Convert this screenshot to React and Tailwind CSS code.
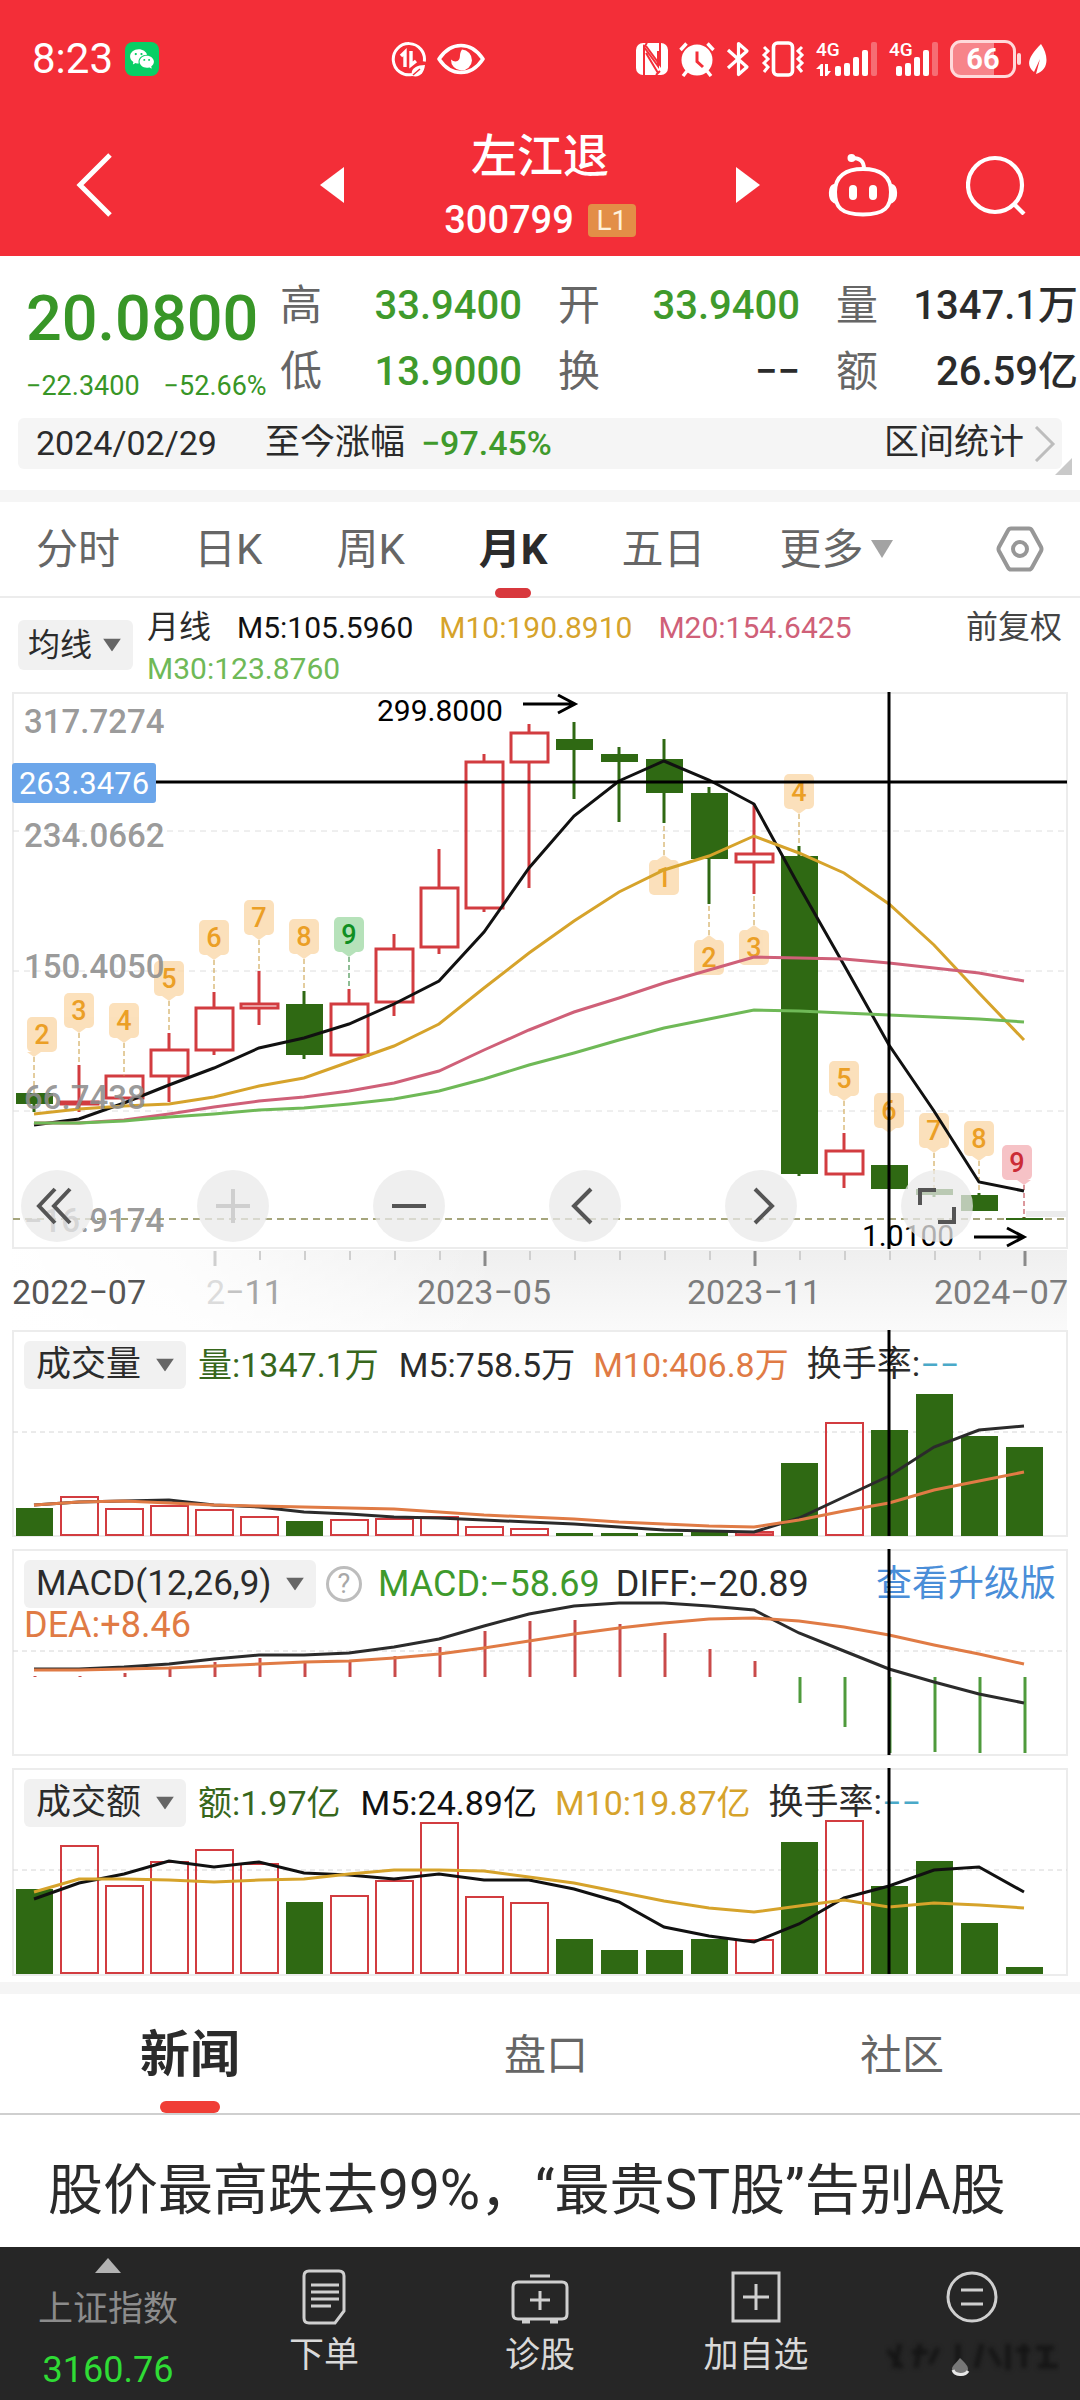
//react
import { useState } from 'react'

//icon
import { RiWechatFill } from 'react-icons/ri'

const UP = '#d23c40'
const DOWN = '#2f6913'

//x of a month on every chart, one step for each candle
const at = (i) => 34 + i * 45

const toPoints = (values) => values.map((y, i) => `${at(i)},${y}`).join(' ')

//[rising, high, body top, body bottom, low]
const candles = [
    [0, 401, 401, 412, 420],
    [1, 373, 410, 412, 420],
    [1, 384, 384, 406, 406],
    [1, 341, 358, 384, 410],
    [1, 300, 316, 358, 363],
    [1, 279, 312, 316, 333],
    [0, 299, 312, 363, 367],
    [1, 297, 312, 363, 363],
    [1, 242, 257, 310, 324],
    [1, 157, 196, 255, 262],
    [1, 62, 70, 216, 220],
    [1, 32, 41, 70, 196],
    [0, 30, 47, 58, 107],
    [0, 55, 62, 70, 130],
    [0, 47, 67, 101, 131],
    [0, 95, 101, 167, 212],
    [1, 112, 162, 170, 202],
    [0, 154, 164, 482, 484],
    [1, 441, 459, 482, 496],
    [0, 473, 473, 497, 497],
    [0, 496, 497, 503, 505],
    [0, 501, 503, 519, 519],
    [0, 525, 526, 528, 528],
]

const priceLines = [
    { color: '#111111', values: [433, 427, 411, 393, 376, 356, 346, 332, 312, 289, 240, 176, 124, 89, 69, 88, 112, 194, 273, 353, 419, 490, 499] },
    { color: '#d6a32b', values: [422, 417, 414, 412, 405, 394, 386, 370, 354, 332, 296, 261, 229, 200, 178, 164, 144, 161, 181, 212, 253, 301, 348] },
    { color: '#cf6078', values: [431, 431, 428, 422, 415, 409, 405, 399, 391, 379, 358, 338, 320, 306, 291, 278, 265, 266, 267, 271, 276, 281, 289] },
    { color: '#6fb957', values: [431, 431, 429, 425, 422, 418, 416, 412, 407, 399, 387, 373, 361, 348, 336, 327, 318, 319, 321, 323, 325, 327, 330] },
]

//nine-turn signals, "to" is where the dashed line ends
const signals = [
    { i: 0, n: 2, top: 325, to: 401, shift: 8 },
    { i: 1, n: 3, top: 301, to: 373 },
    { i: 2, n: 4, top: 311, to: 384 },
    { i: 3, n: 5, top: 269, to: 341 },
    { i: 4, n: 6, top: 228, to: 300 },
    { i: 5, n: 7, top: 208, to: 279 },
    { i: 6, n: 8, top: 227, to: 299 },
    { i: 7, n: 9, top: 225, to: 297, tone: 'green' },
    { i: 14, n: 1, top: 163, to: 131, up: true },
    { i: 15, n: 2, top: 243, to: 212, up: true },
    { i: 16, n: 3, top: 233, to: 202, up: true },
    { i: 17, n: 4, top: 82, to: 154 },
    { i: 18, n: 5, top: 369, to: 441 },
    { i: 19, n: 6, top: 401, to: 473 },
    { i: 20, n: 7, top: 421, to: 497 },
    { i: 21, n: 8, top: 429, to: 501 },
    { i: 22, n: 9, top: 453, to: 526, shift: -7, tone: 'red' },
]

const tones = {
    orange: { bg: '#fbd9ab', text: '#eb9f26', line: '#c89a3c' },
    green: { bg: '#a5dcaa', text: '#0f8f22', line: '#1f7d2b' },
    red: { bg: '#f5b3b8', text: '#cb2c36', line: '#b8323a' },
}

//[rising, top of the bar]
const volumeBars = [
    [0, 178], [1, 167], [1, 179], [1, 176], [1, 180], [1, 187], [0, 191], [1, 190],
    [1, 189], [1, 187], [1, 197], [1, 199], [0, 203], [0, 203], [0, 203], [0, 201],
    [1, 202], [0, 133], [1, 93], [0, 100], [0, 64], [0, 106], [0, 117],
]
const volumeLines = [
    { color: '#2b2b2b', values: [175, 172, 171, 170, 175, 177, 182, 184, 187, 188, 190, 192, 194, 197, 200, 201, 202, 188, 167, 146, 117, 100, 96] },
    { color: '#e07b45', values: [175, 172, 171, 173, 175, 176, 177, 178, 179, 182, 185, 187, 189, 192, 194, 196, 197, 190, 181, 173, 160, 151, 142] },
]

const macdTips = [127, 127, 124, 119, 113, 109, 113, 111, 107, 98, 82, 72, 71, 75, 84, 100, 112, 154, 178, 204, 203, 204, 204]
const macdLines = [
    { color: '#2b2b2b', values: [120, 120, 118, 115, 110, 106, 106, 104, 98, 90, 77, 65, 57, 54, 54, 57, 61, 84, 102, 120, 133, 145, 154] },
    { color: '#e07b45', values: [121, 121, 120, 119, 117, 115, 113, 112, 109, 105, 99, 92, 85, 79, 74, 70, 69, 72, 78, 86, 96, 105, 115] },
]

const amountBars = [
    [0, 121], [1, 78], [1, 118], [1, 94], [1, 82], [1, 96], [0, 134], [1, 128],
    [1, 113], [1, 55], [1, 129], [1, 135], [0, 171], [0, 182], [0, 182], [0, 171],
    [1, 172], [0, 74], [1, 53], [0, 118], [0, 93], [0, 155], [0, 199],
]
const amountLines = [
    { color: '#111111', values: [131, 115, 106, 93, 99, 94, 105, 107, 111, 106, 112, 112, 121, 134, 159, 168, 174, 156, 130, 118, 102, 99, 124] },
    { color: '#d6a32b', values: [124, 111, 111, 112, 114, 112, 111, 106, 102, 102, 103, 109, 115, 124, 133, 140, 144, 138, 132, 139, 135, 137, 140] },
]

//Icons of the phone's status bar
const DataSaver = () => (
    <svg className="h-9 w-9" viewBox="0 0 36 36" fill="none" stroke="#fff" strokeWidth="3">
        <path d="M21 33.5a15.6 15.6 0 1 1 12.3-13" />
        <path d="M10 15l4-4v15M20 10v14l5-4" strokeWidth="3.4" />
        <path d="M21 35c-2-7 4-11 13-11-1 8-5 13-13 11z" fill="#fff" stroke="none" />
        <path d="M22 34l7-6" stroke="#f32e38" strokeWidth="1.5" />
    </svg>
)

const EyeCare = () => (
    <svg className="h-8 w-12" viewBox="0 0 48 32" fill="none">
        <path d="M2 16C8 7 15 2.500 24 2.500S40 7 46 16c-6 9-13 13.500-22 13.500S8 25 2 16z" stroke="#fff" strokeWidth="3.600" strokeLinejoin="round" />
        <path d="M25 6.500a10.500 10.500 0 1 1-11 10c2 2 4.500 2.500 6.500 1.500 4-2 1-7 4.500-11.500z" fill="#fff" />
    </svg>
)

const Nfc = () => (
    <svg className="h-8 w-8" viewBox="0 0 32 32">
        <rect width="32" height="32" rx="7" fill="#fff" />
        <path d="M8 32V4l14 19V8M10 3l14 19V0M8 4l3-4M24 28l-4 4M10 10l12 20" fill="none" stroke="#f32e38" strokeWidth="2" />
        <path d="M12.500 17v13h6.500z" fill="#fff" />
    </svg>
)

const Alarm = () => (
    <svg className="h-9 w-9" viewBox="0 0 36 36" fill="none" stroke="#fff" strokeWidth="3.400">
        <circle cx="18" cy="19" r="15.500" fill="#fff" stroke="none" />
        <path d="M1.500 9l6-6.500M34.500 9l-6-6.500M8 30l-4 5M28 30l4 5" />
        <path d="M18 10.500v10l6 5.500" stroke="#f32e38" strokeWidth="3" />
    </svg>
)

const Bluetooth = () => (
    <svg className="h-9 w-6" viewBox="0 0 24 36" fill="none" stroke="#fff" strokeWidth="3.200">
        <path d="M2 9l19 17-8.500 7.500v-31L21 10 2 27" strokeLinejoin="round" />
    </svg>
)

const Vibrate = () => (
    <svg className="h-9 w-11" viewBox="0 0 44 36" fill="none" stroke="#fff" strokeWidth="3">
        <rect x="12.500" y="2" width="19" height="32" rx="4" strokeWidth="3.600" />
        <path d="M3 6l4 4-4 4 4 4-4 4 4 4-4 5M41 6l-4 4 4 4-4 4 4 4-4 4 4 5" />
    </svg>
)

const Signal = ({ arrows }) => (
    <div className={`relative h-9 ${arrows ? 'w-[62px]' : 'w-[50px]'}`}>
        <span className="absolute top-0 left-0 text-[19px] leading-[18px] font-medium">4G</span>
        <svg className="h-9 w-full" viewBox={arrows ? '0 0 62 36' : '12 0 50 36'} fill="#fff">
            {arrows && <path d="M0 28l5-5h2v12H4v-7zM9 23h3v7h3l-4 5H9z" />}
            <rect x="19" y="25" width="6" height="10" rx="2" />
            <rect x="28" y="22" width="6" height="13" rx="2" />
            <rect x="37" y="16" width="6" height="19" rx="2" />
            <rect x="46" y="9" width="6" height="26" rx="2" />
            <rect x="55" y="1" width="6" height="34" rx="2" opacity=".3" />
        </svg>
    </div>
)

const Battery = () => (
    <div className="flex items-center gap-px">
        <div className="flex h-[38px] w-[66px] items-center justify-center rounded-[11px] border-3 border-[#ffd9da] bg-[linear-gradient(90deg,#f7848a_68%,transparent_68%)] text-[29px] leading-none font-bold">66</div>
        <div className="h-3 w-1 rounded-sm bg-[#ffd9da]" />
        <svg className="ml-1.5 h-[30px] w-[19px]" viewBox="0 0 19 30">
            <path d="M13 0c8 12 8 26-5 30l4-15-6 13C-3 21 1 12 13 0z" fill="#fff" />
        </svg>
    </div>
)

const StatusBar = () => (
    <div className="flex h-[50px] items-center justify-between pr-[33px] pl-8">
        <div className="flex items-center gap-3">
            <span className="text-[42px] leading-[50px]">8:23</span>
            <span className="flex h-[34px] w-[34px] items-center justify-center rounded-lg bg-[#08cf65]">
                <RiWechatFill className="h-[26px] w-[26px]" />
            </span>
        </div>
        <div className="ml-20 flex items-center gap-2.5">
            <DataSaver />
            <EyeCare />
        </div>
        <div className="flex items-center gap-[11px]">
            <Nfc />
            <Alarm />
            <Bluetooth />
            <Vibrate />
            <Signal arrows />
            <Signal />
            <Battery />
        </div>
    </div>
)

const Header = () => (
    <header className="bg-[#f32e38] pt-[34px] pb-4 text-white">
        <StatusBar />
        <div className="mt-[46px] grid grid-cols-[1fr_auto_1fr] items-center">
            <div className="flex items-center justify-between pr-25 pl-19">
                <button aria-label="返回">
                    <svg className="h-16 w-9" viewBox="0 0 36 64" fill="none" stroke="#fff" strokeWidth="5">
                        <path d="M34 2L4 32l30 30" />
                    </svg>
                </button>
                <button aria-label="上一只">
                    <svg className="h-9 w-6" viewBox="0 0 24 36" fill="#fff"><path d="M24 0v36L0 18z" /></svg>
                </button>
            </div>
            <div className="flex flex-col items-center">
                <h1 className="text-[46px] leading-[52px] font-medium">左江退</h1>
                <div className="mt-[18px] flex h-10 items-center gap-3.5">
                    <span className="text-[38px] leading-10 font-medium">300799</span>
                    <span className="flex h-[33px] w-12 items-center justify-center rounded-sm bg-[#e38e47] text-[28px] leading-[33px] text-[#fff2dc]">L1</span>
                </div>
            </div>
            <div className="flex items-center justify-between pr-[54px] pl-25">
                <button aria-label="下一只">
                    <svg className="h-9 w-6" viewBox="0 0 24 36" fill="#fff"><path d="M0 0v36l24-18z" /></svg>
                </button>
                <button aria-label="助手">
                    <svg className="h-16 w-[70px]" viewBox="0 0 70 64" fill="none" stroke="#fff" strokeWidth="4">
                        <path d="M35 16c17 0 28 7 28 23 0 15-6 22.500-28 22.500S7 54 7 39c0-16 11-23 28-23z" />
                        <path d="M36 16c0-8-4-11-12-11" />
                        <circle cx="23.500" cy="5" r="4" fill="#fff" stroke="none" />
                        <path d="M6 32c-5 1-6 14 0 17zM64 32c5 1 6 14 0 17z" fill="#fff" strokeWidth="2" />
                        <path d="M25 36v7M45 36v7" strokeWidth="8" strokeLinecap="round" />
                    </svg>
                </button>
                <button aria-label="搜索">
                    <svg className="h-[60px] w-[60px]" viewBox="0 0 60 60" fill="none" stroke="#fff" strokeWidth="4.200">
                        <circle cx="29" cy="30" r="27" />
                        <path d="M47 48l11 11" />
                    </svg>
                </button>
            </div>
        </div>
    </header>
)

const quotes = [
    { name: '高', value: '33.9400', color: 'text-[#3f9a2c]' },
    { name: '开', value: '33.9400', color: 'text-[#3f9a2c]' },
    { name: '量', value: '1347.1万', color: 'text-[#2b2b2b]' },
    { name: '低', value: '13.9000', color: 'text-[#3f9a2c]' },
    { name: '换', value: '−−', color: 'text-[#2b2b2b]' },
    { name: '额', value: '26.59亿', color: 'text-[#2b2b2b]' },
]

const Quote = () => (
    <section className="pt-[17px]">
        <div className="flex pr-0.5 pl-[26px]">
            <div className="w-[254px] pt-[14px] text-[#389627]">
                <p className="text-[63px] leading-[64px] font-medium">20.0800</p>
                <p className="mt-[19px] flex gap-6 text-[27px] leading-8 whitespace-nowrap">
                    <span>−22.3400</span>
                    <span>−52.66%</span>
                </p>
            </div>
            <dl className="grid flex-1 grid-cols-3 gap-x-9">
                {quotes.map((q) => (
                    <div key={q.name} className="flex h-[66px] items-center justify-between whitespace-nowrap">
                        <dt className="text-[42px] leading-[66px] text-[#666]">{q.name}</dt>
                        <dd className={`text-[40px] leading-[66px] font-medium ${q.color}`}>{q.value}</dd>
                    </div>
                ))}
            </dl>
        </div>
        <div className="relative mx-[18px] mt-[13px] mb-[21px] flex h-[51px] items-center rounded-md bg-[#f5f5f5] pr-1.5 pl-[18px] text-[35px] text-[#2b2b2b]">
            <span className="text-[34px]">2024/02/29</span>
            <span className="ml-12">至今涨幅</span>
            <span className="ml-4 text-[34px] font-medium text-[#3f9a2c]">−97.45%</span>
            <button className="ml-auto flex items-center gap-2.5">
                区间统计
                <svg className="h-9 w-[22px]" viewBox="0 0 22 36" fill="none" stroke="#bdbdbd" strokeWidth="3"><path d="M2 1l17 17L2 35" /></svg>
            </button>
            <svg className="absolute -right-2.5 -bottom-1.5 h-[17px] w-[17px]" viewBox="0 0 17 17" fill="#c9c9c9"><path d="M17 0v17H0z" /></svg>
        </div>
    </section>
)

const periods = ['分时', '日K', '周K', '月K', '五日']

const PeriodTabs = () => {
    const [active, setActive] = useState('月K')
    return (
        <nav className="flex h-[96px] items-center gap-[74px] border-b-2 border-[#ececec] pr-9 pl-9 text-[42px] text-[#666]">
            {periods.map((p) => (
                <button
                    key={p}
                    onClick={() => setActive(p)}
                    className={`relative h-full whitespace-nowrap ${p === active ? 'font-bold text-[#2b2b2b]' : ''}`}>
                    {p}
                    {p === active && <span className="absolute -bottom-0.5 left-1/2 h-2.5 w-9 -translate-x-1/2 rounded-full bg-[#d8383d]" />}
                </button>
            ))}
            <button className="flex items-center gap-2 whitespace-nowrap">
                更多
                <svg className="h-[18px] w-[22px]" viewBox="0 0 22 18" fill="#a3a3a3"><path d="M0 0h22L11 18z" /></svg>
            </button>
            <button aria-label="设置" className="ml-auto">
                <svg className="h-[46px] w-12" viewBox="0 0 48 46" fill="none" stroke="#979797" strokeWidth="4">
                    <path d="M15 2.500h18q2 0 3 2l9 16.500q1 2 0 4l-9 16.500q-1 2-3 2H15q-2 0-3-2L3 25q-1-2 0-4l9-16.500q1-2 3-2z" />
                    <circle cx="24" cy="23" r="7" />
                </svg>
            </button>
        </nav>
    )
}

//Grey drop-down that changes the indicator
const Picker = ({ label, value, className }) => (
    <label className="relative block shrink-0 rounded-md bg-[#f1f1f1] text-[#2b2b2b]">
        <select aria-label={label} className={`block appearance-none bg-transparent ${className}`}>
            <option>{value}</option>
        </select>
        <svg className="pointer-events-none absolute top-1/2 right-3 h-[13px] w-[18px] -translate-y-1/2" viewBox="0 0 18 13" fill="#666">
            <path d="M0 0h18L9 13z" />
        </svg>
    </label>
)

const Averages = () => (
    <div className="flex items-start px-[18px] pb-[3px] text-[32px]">
        <div className="pt-[22px]">
            <Picker label="主图指标" value="均线" className="h-[50px] pr-10 pl-2.5" />
        </div>
        <p className="ml-3.5 flex flex-1 flex-wrap gap-x-[26px] pt-[9px] text-[30px] leading-[41px]">
            <span className="text-[32px] text-[#2b2b2b]">月线</span>
            <span className="text-[#111]">M5:105.5960</span>
            <span className="text-[#d6a32b]">M10:190.8910</span>
            <span className="text-[#cf6078]">M20:154.6425</span>
            <span className="text-[#6fb957]">M30:123.8760</span>
        </p>
        <button className="pt-[9px] leading-[41px] text-[#444]">前复权</button>
    </div>
)

const Lines = ({ lines }) => lines.map((l) => (
    <polyline key={l.color} points={toPoints(l.values)} fill="none" stroke={l.color} strokeWidth="3" />
))

const Frame = ({ height }) => (
    <>
        <rect x="13" y="1" width="1054" height={height - 2} fill="none" stroke="#ececec" strokeWidth="2" />
        {height < 300 && <path d="M13 102H1067" stroke="#d6d6d6" strokeDasharray="5 4" />}
    </>
)

const Crosshair = ({ height }) => <path d={`M889 0V${height}`} stroke="#000" strokeWidth="3" />

const Bars = ({ bars, bottom }) => bars.map(([rising, top], i) => (
    rising
        ? <rect key={i} x={at(i) - 18} y={top} width="37" height={bottom - top - 1} fill={bottom - top < 6 ? '#e8686b' : 'none'} stroke={UP} strokeWidth="2" />
        : <rect key={i} x={at(i) - 18} y={top} width="37" height={bottom - top} fill={DOWN} />
))

const SignalTag = ({ i, n, top, to, shift = 0, up, tone = 'orange' }) => {
    const x = at(i)
    const c = tones[tone]
    const left = x + shift - 15
    const body = up ? top + 5 : top
    const tip = up
        ? `M${x - 7} ${body}L${x} ${top}L${x + 7} ${body}z`
        : `M${x - 7} ${body + 35}L${x} ${body + 40}L${x + 7} ${body + 35}z`
    return (
        <g>
            <path d={`M${x} ${up ? top : top + 40}V${to}`} stroke={c.line} strokeDasharray="5 3" />
            <g fill={c.bg} opacity=".8">
                <rect x={left} y={body} width="30" height="35" rx="5" />
                <path d={tip} />
            </g>
            <text x={x + shift} y={body + 27} textAnchor="middle" fontSize="27" fontWeight="500" fill={c.text}>{n}</text>
        </g>
    )
}

const tools = [
    { name: '最早', path: 'M34 19L18 36l16 17M49 19L33 36l16 17', color: '#555' },
    { name: '放大', path: 'M19 36h34M36 19v34', color: '#cfcfcf' },
    { name: '缩小', path: 'M19 36h34', color: '#555' },
    { name: '左移', path: 'M42 19L25 36l17 17', color: '#555' },
    { name: '右移', path: 'M30 19l17 17-17 17', color: '#555' },
    { name: '全屏', path: 'M19 35V20h16M53 37v15H37', color: '#555' },
]

const PriceChart = () => (
    <section className="relative">
        <svg className="block w-full overflow-visible" viewBox="0 0 1080 557">
            <Frame height={557} />
            <path d="M13 139H1067M13 279H1067M13 419H1067" stroke="#dedede" strokeDasharray="6 5" />
            <path d="M13 527H1067" stroke="#a5a57c" strokeWidth="2" strokeDasharray="7 5" />
            <rect x="1026" y="519" width="41" height="6" fill="#ececec" />
            {candles.map(([rising, high, top, bottom, low], i) => (
                <g key={i} stroke={rising ? UP : DOWN} strokeWidth="3">
                    <path d={`M${at(i)} ${high}V${top}M${at(i)} ${bottom}V${low}`} />
                    {rising
                        ? <rect x={at(i) - 18} y={top} width="37" height={bottom - top} fill="none" />
                        : <rect x={at(i) - 18} y={top} width="37" height={bottom - top} fill={DOWN} stroke="none" />}
                </g>
            ))}
            {signals.map((s) => <SignalTag key={s.i} {...s} />)}
            <Lines lines={priceLines} />
            <g fontSize="33" fontWeight="500" fill="#8d8d8d" fillOpacity=".9">
                <text x="24" y="41">317.7274</text>
                <text x="24" y="155">234.0662</text>
                <text x="24" y="286">150.4050</text>
                <text x="24" y="417">66.7438</text>
                <text x="24" y="540">−16.9174</text>
            </g>
            <g fontSize="30" fill="#000">
                <text x="377" y="29">299.8000</text>
                <text x="862" y="554">1.0100</text>
            </g>
            <path d="M523 12H574M558 3l17 9-17 9M974 545H1024M1007 536l17 9-17 9" fill="none" stroke="#000" strokeWidth="3" />
            <path d="M156 90H1067" stroke="#000" strokeWidth="3" />
            <rect x="12" y="71" width="144" height="40" rx="3" fill="#6ca6ea" />
            <text x="84" y="102" textAnchor="middle" fontSize="31" fill="#fff">263.3476</text>
            <Crosshair height={557} />
        </svg>
        <div className="absolute inset-x-0 bottom-[7px] flex justify-between pr-[107px] pl-[21px]">
            {tools.map((t) => (
                <button key={t.name} aria-label={t.name} className="h-[72px] w-[72px] rounded-full bg-[#e9e9e9]/75">
                    <svg className="h-[72px] w-[72px]" viewBox="0 0 72 72" fill="none" stroke={t.color} strokeWidth="4"><path d={t.path} /></svg>
                </button>
            ))}
        </div>
    </section>
)

const TimeAxis = () => (
    <svg className="block w-full" viewBox="0 0 1080 81">
        <defs>
            <linearGradient id="axisFade" x2="0" y2="1">
                <stop offset="0" stopColor="#efefef" />
                <stop offset="1" stopColor="#fafafa" />
            </linearGradient>
            <linearGradient id="axisLeft">
                <stop offset="0" stopColor="#fff" />
                <stop offset=".35" stopColor="#fff" stopOpacity=".85" />
                <stop offset="1" stopColor="#fff" stopOpacity="0" />
            </linearGradient>
        </defs>
        <rect x="12" y="1" width="1055" height="80" fill="url(#axisFade)" />
        <rect x="0" y="1" width="500" height="80" fill="url(#axisLeft)" />
        {candles.map((_, i) => {
            if (i < 4) return null
            const major = (i - 4) % 6 === 0
            return <path key={i} d={`M${at(i) + 1} 2V${major ? 17 : 11}`} stroke={major && i > 4 ? '#8a8a8a' : '#cfcfcf'} strokeWidth={major ? 3 : 2} />
        })}
        <g fontSize="34" fill="#7c7c7c">
            <text x="12" y="55" fill="#555">2022−07</text>
            <text x="206" y="55" fill="#a5a5a5"><tspan fill="#dcdcdc">2</tspan><tspan fill="#c4c4c4">−</tspan>11</text>
            <text x="484" y="55" textAnchor="middle">2023−05</text>
            <text x="754" y="55" textAnchor="middle">2023−11</text>
            <text x="1068" y="55" textAnchor="end">2024−07</text>
        </g>
    </svg>
)

const VolumeChart = () => (
    <section className="relative">
        <div className="absolute inset-x-0 top-[11px] flex items-center pl-6 text-[34px] leading-12 whitespace-nowrap">
            <Picker label="副图指标一" value="成交量" className="h-12 pr-11 pl-3 text-[35px]" />
            <span className="ml-3 text-[#37671c]">量:1347.1万</span>
            <span className="ml-5 text-[#2b2b2b]">M5:758.5万</span>
            <span className="ml-[18px] text-[#e07b45]">M10:406.8万</span>
            <span className="ml-[18px] text-[35px] text-[#2b2b2b]">换手率:</span>
            <span className="text-[#4aa9c8]">−−</span>
        </div>
        <svg className="pointer-events-none relative block w-full" viewBox="0 0 1080 207">
            <Frame height={207} />
            <Bars bars={volumeBars} bottom={206} />
            <Lines lines={volumeLines} />
            <Crosshair height={206} />
        </svg>
    </section>
)

const MacdChart = () => (
    <section className="relative mt-3">
        <div className="absolute inset-x-0 top-[11px] flex items-center pr-6 pl-6 text-[36px] leading-12 whitespace-nowrap">
            <Picker label="副图指标二" value="MACD(12,26,9)" className="h-12 pr-11 pl-3 text-[35px]" />
            <button aria-label="指标说明" className="ml-2.5 h-9 w-9 rounded-full border-3 border-[#bdbdbd] text-[27px] leading-[30px] text-[#a8a8a8]">?</button>
            <span className="ml-4 text-[#3f9a2c]">MACD:−58.69</span>
            <span className="ml-4 text-[#2b2b2b]">DIFF:−20.89</span>
            <a href="#macd" className="ml-auto text-[#4a8ed8]">查看升级版</a>
        </div>
        <p className="absolute top-[56px] left-6 text-[36px] leading-10 text-[#e07b45]">DEA:+8.46</p>
        <svg className="pointer-events-none relative block w-full" viewBox="0 0 1080 207">
            <Frame height={207} />
            {macdTips.map((y, i) => (
                <path key={i} d={`M${at(i) + 1} 128V${y}`} stroke={y > 128 ? '#4f9a3c' : '#c94a4a'} strokeWidth="3" />
            ))}
            <Lines lines={macdLines} />
            <Crosshair height={206} />
        </svg>
    </section>
)

const AmountChart = () => (
    <section className="relative mt-3">
        <div className="absolute inset-x-0 top-[11px] flex items-center pl-6 text-[34px] leading-12 whitespace-nowrap">
            <Picker label="副图指标三" value="成交额" className="h-12 pr-11 pl-3 text-[35px]" />
            <span className="ml-3 text-[#37671c]">额:1.97亿</span>
            <span className="ml-5 text-[#111]">M5:24.89亿</span>
            <span className="ml-[18px] text-[#d6a32b]">M10:19.87亿</span>
            <span className="ml-[18px] text-[35px] text-[#2b2b2b]">换手率:</span>
            <span className="text-[#4aa9c8]">−−</span>
        </div>
        <svg className="pointer-events-none relative block w-full" viewBox="0 0 1080 208">
            <Frame height={208} />
            <Bars bars={amountBars} bottom={206} />
            <Lines lines={amountLines} />
            <Crosshair height={206} />
        </svg>
    </section>
)

const News = () => {
    const [active, setActive] = useState('新闻')
    return (
        <section>
            <nav className="grid h-[121px] grid-cols-3 border-b-2 border-[#cfcfcf] pl-3 text-[#666]">
                {['新闻', '盘口', '社区'].map((t) => (
                    <button
                        key={t}
                        onClick={() => setActive(t)}
                        className={`relative h-full pt-1 ${t === active ? 'text-[50px] font-bold text-[#2b2b2b]' : 'text-[42px]'}`}>
                        {t}
                        {t === active && <span className="absolute bottom-0 left-1/2 h-3 w-[60px] -translate-x-1/2 rounded-full bg-[#f03e36]" />}
                    </button>
                ))}
            </nav>
            <a href="#news" className="block truncate pt-10 pb-[22px] pl-12 text-[55px] leading-[70px] text-[#2b2b2b]">股价最高跌去99%，“最贵ST股”告别A股</a>
        </section>
    )
}

const actions = [
    {
        name: '下单',
        icon: <path d="M9 3h30q5 0 5 5v35l-9 12H9q-5 0-5-5V8q0-5 5-5zM11 17h28M11 24h28M11 31h28M11 38h20" />,
    },
    {
        name: '诊股',
        icon: <path d="M2 14q-5 0-5 5v27q0 5 5 5h44q5 0 5-5V19q0-5-5-5zM14 8h20M24 23v19M14 32h20M6 54h8M34 54h8" />,
    },
    {
        name: '加自选',
        icon: <path d="M1 5h46v48H1zM24 16v26M11 29h26" />,
    },
]

const Footer = () => (
    <footer className="grid h-[153px] grid-cols-5 bg-[#262626] text-[35px] text-[#d9d9d9]">
        <button className="flex flex-col items-center pt-[11px]">
            <svg className="h-[15px] w-[26px]" viewBox="0 0 26 15" fill="#b3b3b3"><path d="M13 0l13 15H0z" /></svg>
            <span className="mt-[13px] leading-[48px] text-[#8c8c8c]">上证指数</span>
            <span className="mt-3 text-[36px] leading-[48px] text-[#2fdc35]">3160.76</span>
        </button>
        {actions.map((a) => (
            <button key={a.name} className="flex flex-col items-center pt-[21px]">
                <svg className="h-[58px] w-12 overflow-visible" viewBox="0 0 48 58" fill="none" stroke="#cfcfcf" strokeWidth="3">{a.icon}</svg>
                <span className="mt-1.5 leading-[48px]">{a.name}</span>
            </button>
        ))}
        <button aria-label="更多功能" className="flex flex-col items-center pt-[21px]">
            <svg className="h-[58px] w-[52px]" viewBox="0 0 52 58" fill="none" stroke="#cfcfcf" strokeWidth="3">
                <circle cx="26" cy="29" r="24" />
                <path d="M15 22h22M15 36h22" />
            </svg>
            <svg className="mt-2.5 h-10 w-44" viewBox="0 0 176 40">
                <g className="blur-[2px]" stroke="#151515" strokeWidth="5">
                    <path d="M4 14l14 18M16 8l-6 24M28 16h16M36 8l-4 24M46 28l8-16M74 8v22M98 8l-6 24M106 12l10 18M124 8v26M132 14h14M140 8v24M152 12h18M154 30h20M162 12v20" />
                </g>
                <path d="M76 22c6 6 8 8 8 11a8 7 0 0 1-16 0c0-3 4-6 8-11z" fill="#777" />
                <path d="M69 34a8 6 0 0 0 15 1" fill="none" stroke="#e8e8e8" strokeWidth="3" />
            </svg>
        </button>
    </footer>
)

const App = () => {
    return (
        <main className="w-full overflow-x-hidden bg-white font-['Roboto','Noto_Sans_CJK_SC',sans-serif]">
            <Header />
            <Quote />
            <div className="h-3 bg-[#f5f5f5]" />
            <PeriodTabs />
            <Averages />
            <PriceChart />
            <TimeAxis />
            <VolumeChart />
            <MacdChart />
            <AmountChart />
            <div className="mt-1.5 h-3 bg-[#f5f5f5]" />
            <News />
            <Footer />
        </main>
    )
}

export default App
